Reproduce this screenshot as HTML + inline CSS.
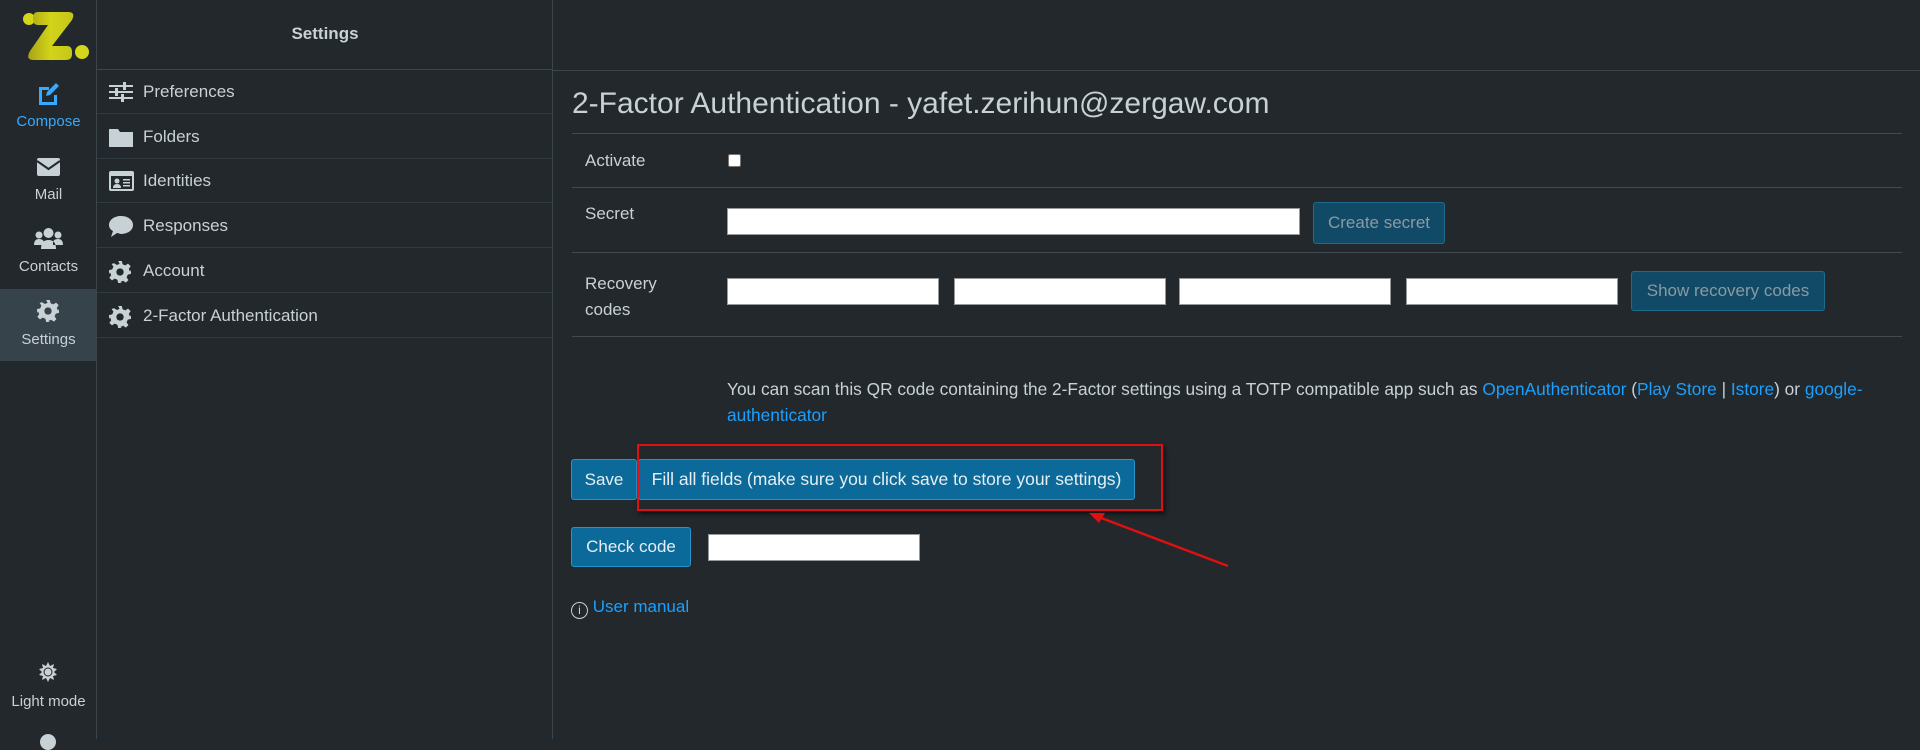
<!DOCTYPE html>
<html><head><meta charset="utf-8"><style>
*{box-sizing:border-box;margin:0;padding:0}
body{width:1920px;height:739px;overflow:hidden;background:#22282c;font-family:"Liberation Sans",sans-serif;color:#c8d1d5;position:relative}
.a{position:absolute}
.rail{left:0;top:0;width:97px;height:739px;background:#22282c;border-right:1px solid #3a454c}
.ri{position:absolute;left:0;width:97px;text-align:center;font-size:15px;color:#c8d1d5}
.panel{left:97px;top:0;width:456px;height:739px;border-right:1px solid #3a454c}
.hdr{left:97px;top:0;width:456px;height:70px;border-bottom:1px solid #3a454c;text-align:center;line-height:68px;font-weight:bold;font-size:17px}
.item{position:absolute;left:0;width:455px;height:44px;border-bottom:1px solid #313a40;font-size:17px;line-height:44px;padding-left:46px}
.item svg{position:absolute;left:12px;top:12px}
.line{position:absolute;left:572px;width:1330px;height:1px;background:#3f4a51}
.lbl{position:absolute;left:585px;font-size:17px}
.inp{position:absolute;background:#fff;border:1px solid #999;height:27px}
.btn{position:absolute;background:#0b6a9a;border:1px solid #2a93c9;border-radius:3px;color:#e6eef2;font-size:17px;text-align:center;white-space:nowrap}
.dis{background:#114a66;border-color:#1e6b8e;color:#8a9aa3}
a{color:#1aa0ff;text-decoration:none}
</style></head><body>
<div class="a rail">
 <svg class="a" style="left:0;top:0" width="96" height="66" viewBox="0 0 96 66">
  <defs><linearGradient id="g" x1="0" y1="0" x2="1" y2="0"><stop offset="0" stop-color="#a9a414"/><stop offset="0.5" stop-color="#d2d41a"/><stop offset="1" stop-color="#c4c618"/></linearGradient></defs>
  <circle cx="29" cy="19" r="6" fill="#d4d61a"/>
  <path d="M38 12h30q8 0 4 8L52 46h15q5 0 5 6v2q0 6-6 6H34q-9 0-4-9L48 25H38q-5 0-5-6v-1q0-6 5-6z" fill="url(#g)"/>
  <circle cx="82" cy="52" r="7" fill="#d4d61a"/>
 </svg>
 <svg class="a" style="left:37px;top:83px" width="24" height="22" viewBox="0 0 24 22"><path d="M2 4h10v3H5v12h12v-7h3v10H2z" fill="#38a9ff"/><path d="M9 13l1-4 9-9 3 3-9 9z" fill="#38a9ff"/></svg>
 <div class="ri" style="top:113px;color:#38a9ff">Compose</div>
 <svg class="a" style="left:37px;top:158px" width="23" height="18" viewBox="0 0 23 18"><rect width="23" height="18" rx="2" fill="#c8d1d5"/><path d="M0 3l11.5 8L23 3" stroke="#22282c" stroke-width="2" fill="none"/></svg>
 <div class="ri" style="top:186px">Mail</div>
 <svg class="a" style="left:34px;top:228px" width="29" height="21" viewBox="0 0 29 21"><circle cx="14.5" cy="5" r="5" fill="#c8d1d5"/><circle cx="5" cy="7" r="3.5" fill="#c8d1d5"/><circle cx="24" cy="7" r="3.5" fill="#c8d1d5"/><path d="M7 21q0-9 7.5-9T22 21z M0 17q0-6 5-6t5 4v2z M29 17q0-6-5-6t-5 4v2z" fill="#c8d1d5"/></svg>
 <div class="ri" style="top:258px">Contacts</div>
 <div class="a" style="left:0;top:289px;width:96px;height:72px;background:#37434a"></div>
 <svg class="a" style="left:37px;top:300px" width="22" height="22" viewBox="0 0 24 24"><path fill="#c8d1d5" d="M10 0h4l.8 3.5 3 1.3 3-2 2.8 2.8-2 3 1.3 3L24 10v4l-3.5.8-1.3 3 2 3-2.8 2.8-3-2-3 1.3L14 24h-4l-.8-3.5-3-1.3-3 2-2.8-2.8 2-3-1.3-3L0 14v-4l3.5-.8 1.3-3-2-3L5.6 2.4l3 2 3-1.3z"/><circle cx="12" cy="12" r="4" fill="#37434a"/></svg>
 <div class="ri" style="top:331px">Settings</div>
 <svg class="a" style="left:38px;top:662px" width="20" height="20" viewBox="0 0 20 20"><path d="M10 0l2 4 4-2-1 4 4 1-3 3 3 3-4 1 1 4-4-2-2 4-2-4-4 2 1-4-4-1 3-3-3-3 4-1-1-4 4 2z" fill="#c8d1d5"/><circle cx="10" cy="10" r="4.5" fill="#22282c"/><circle cx="10" cy="10" r="3.5" fill="#c8d1d5"/></svg>
 <div class="ri" style="top:693px">Light mode</div>
 <div class="a" style="left:40px;top:734px;width:16px;height:16px;border-radius:50%;background:#c8d1d5"></div>
</div>
<div class="a panel">
 <div class="item" style="top:70px">
  <svg width="24" height="20" viewBox="0 0 24 20" fill="#c8d1d5"><rect y="3" width="24" height="2"/><rect x="14" y="0" width="3" height="8"/><rect y="9" width="24" height="2"/><rect x="6" y="6" width="3" height="8"/><rect y="15" width="24" height="2"/><rect x="12" y="12" width="3" height="8"/></svg>Preferences</div>
 <div class="item" style="top:115px"><svg width="24" height="20" viewBox="0 0 24 20"><path d="M0 2h9l2 3h13v15H0z" fill="#c8d1d5"/></svg>Folders</div>
 <div class="item" style="top:159px"><svg width="25" height="20" viewBox="0 0 25 20"><rect width="25" height="20" rx="2" fill="#c8d1d5"/><rect x="2" y="5" width="21" height="13" fill="#22282c"/><circle cx="8" cy="10" r="2.5" fill="#c8d1d5"/><path d="M4 17q0-4 4-4t4 4z" fill="#c8d1d5"/><rect x="14" y="8" width="7" height="1.5" fill="#c8d1d5"/><rect x="14" y="11" width="7" height="1.5" fill="#c8d1d5"/><rect x="14" y="14" width="7" height="1.5" fill="#c8d1d5"/></svg>Identities</div>
 <div class="item" style="top:204px"><svg width="24" height="21" viewBox="0 0 24 21"><path d="M12 0C5 0 0 4 0 9c0 3 2 5 4 6l-2 6 6-4c1 0 3 1 4 1 7 0 12-4 12-9S19 0 12 0z" fill="#c8d1d5"/></svg>Responses</div>
 <div class="item" style="top:249px"><svg width="22" height="22" viewBox="0 0 24 24"><path fill="#c8d1d5" d="M10 0h4l.8 3.5 3 1.3 3-2 2.8 2.8-2 3 1.3 3L24 10v4l-3.5.8-1.3 3 2 3-2.8 2.8-3-2-3 1.3L14 24h-4l-.8-3.5-3-1.3-3 2-2.8-2.8 2-3-1.3-3L0 14v-4l3.5-.8 1.3-3-2-3L5.6 2.4l3 2 3-1.3z"/><circle cx="12" cy="12" r="4" fill="#22282c"/></svg>Account</div>
 <div class="item" style="top:294px"><svg width="22" height="22" viewBox="0 0 24 24"><path fill="#c8d1d5" d="M10 0h4l.8 3.5 3 1.3 3-2 2.8 2.8-2 3 1.3 3L24 10v4l-3.5.8-1.3 3 2 3-2.8 2.8-3-2-3 1.3L14 24h-4l-.8-3.5-3-1.3-3 2-2.8-2.8 2-3-1.3-3L0 14v-4l3.5-.8 1.3-3-2-3L5.6 2.4l3 2 3-1.3z"/><circle cx="12" cy="12" r="4" fill="#22282c"/></svg>2-Factor Authentication</div>
</div>
<div class="a hdr">Settings</div>
<div class="a" style="left:553px;top:70px;width:1367px;height:1px;background:#3a454c"></div>

<div class="a" style="left:572px;top:87px;font-size:30px;color:#c8d1d5;white-space:nowrap">2-Factor Authentication - yafet.zerihun@zergaw.com</div>
<div class="line" style="top:133px"></div>
<div class="lbl" style="top:151px">Activate</div>
<div class="a" style="left:728px;top:154px;width:13px;height:13px;background:#fff;border-radius:2px;border:1px solid #777"></div>
<div class="line" style="top:187px"></div>
<div class="lbl" style="top:204px">Secret</div>
<div class="inp" style="left:727px;top:208px;width:573px"></div>
<div class="btn dis" style="left:1313px;top:202px;width:132px;height:42px;line-height:40px">Create secret</div>
<div class="line" style="top:252px"></div>
<div class="lbl" style="top:271px;line-height:26px">Recovery<br>codes</div>
<div class="inp" style="left:727px;top:278px;width:212px"></div>
<div class="inp" style="left:954px;top:278px;width:212px"></div>
<div class="inp" style="left:1179px;top:278px;width:212px"></div>
<div class="inp" style="left:1406px;top:278px;width:212px"></div>
<div class="btn dis" style="left:1631px;top:271px;width:194px;height:40px;line-height:38px">Show recovery codes</div>
<div class="line" style="top:336px"></div>
<div class="a" style="left:727px;top:376px;font-size:17.3px;line-height:26px;white-space:nowrap">You can scan this QR code containing the 2-Factor settings using a TOTP compatible app such as <a>OpenAuthenticator</a> (<a>Play Store</a> | <a>Istore</a>) or <a>google-</a><br><a>authenticator</a></div>
<div class="btn" style="left:571px;top:459px;width:66px;height:41px;line-height:39px">Save</div>
<div class="btn" style="left:638px;top:459px;width:497px;height:41px;line-height:39px;font-size:17.5px">Fill all fields (make sure you click save to store your settings)</div>
<div class="a" style="left:637px;top:444px;width:526px;height:67px;border:2px solid #e01010;box-shadow:2px 3px 4px rgba(0,0,0,.6)"></div>
<svg class="a" style="left:1080px;top:505px" width="160" height="70" viewBox="0 0 160 70"><line x1="148" y1="61" x2="16" y2="11" stroke="#e01010" stroke-width="2.5"/><path d="M9 8l16 0-6 10z" fill="#e01010"/></svg>
<div class="btn" style="left:571px;top:527px;width:120px;height:40px;line-height:38px">Check code</div>
<div class="inp" style="left:708px;top:534px;width:212px"></div>
<div class="a" style="left:571px;top:597px;font-size:17px"><span style="display:inline-block;width:17px;height:17px;border:1px solid #c8d1d5;border-radius:50%;font-size:12px;text-align:center;line-height:15px;vertical-align:-2px">i</span> <a>User manual</a></div>
</body></html>
